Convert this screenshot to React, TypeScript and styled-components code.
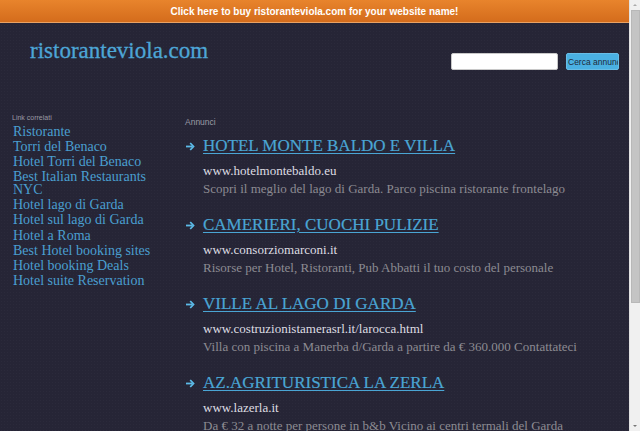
import React from "react";
import styled, { createGlobalStyle } from "styled-components";

const Global = createGlobalStyle`
  html, body { margin: 0; padding: 0; overflow: hidden; background: #262536; }
  * { box-sizing: border-box; }
`;

const Frame = styled.div`
  display: flex;
  width: 640px;
  height: 431px;
  overflow: hidden;
`;

const Page = styled.div`
  flex: 1;
  min-width: 0;
  height: 431px;
  background-color: #262536;
  background-image: radial-gradient(rgba(255,255,255,0.025) 1px, transparent 1px);
  background-size: 3px 3px;
  overflow: hidden;
`;

const TopBar = styled.a`
  display: flex;
  align-items: center;
  justify-content: center;
  height: 23px;
  background: linear-gradient(#e8842c, #d46c1c);
  border-bottom: 1px solid #e9a264;
  color: #fff;
  font: bold 10px "Liberation Sans", Arial, sans-serif;
  text-decoration: none;
`;

const Header = styled.div`
  display: flex;
  justify-content: space-between;
  align-items: flex-start;
  height: 90px;
  padding: 14px 10px 0 30px;
`;

const Logo = styled.div`
  font: 23px/28px "Liberation Serif", "Times New Roman", serif;
  color: #4da6d6;
  -webkit-text-stroke: 0.3px #4da6d6;
`;

const Search = styled.form`
  display: flex;
  gap: 8px;
  margin-top: 16px;
`;

const SearchInput = styled.input`
  width: 107px;
  height: 17px;
  border: 1px solid #c8c8c8;
  border-radius: 2px;
  background: #fff;
  padding: 0;
`;

const SearchButton = styled.button`
  width: 53px;
  height: 17px;
  padding: 0 0 0 1px;
  border: 1px solid #68bde6;
  border-radius: 2px;
  background: #4ab0e2;
  color: #1f2a3a;
  font: 8.5px "Liberation Sans", Arial, sans-serif;
  text-align: left;
  white-space: nowrap;
  overflow: hidden;
`;

const Body = styled.div`
  display: flex;
`;

const Sidebar = styled.div`
  width: 185px;
  flex: none;
  padding-left: 12px;
  padding-right: 26px;
`;

const SmallLabel = styled.div<{ $size?: number }>`
  font: ${(p) => p.$size ?? 7}px/10px "Liberation Sans", Arial, sans-serif;
  color: #9a9aa4;
`;

const LinkList = styled.ul`
  list-style: none;
  margin: 1.5px 0 0 1px;
  padding: 0;
  display: flex;
  flex-direction: column;
  gap: 2.2px;
`;

const SideLink = styled.a`
  display: block;
  font: 14px/13px "Liberation Serif", "Times New Roman", serif;
  color: #4a9fd0;
  text-decoration: none;
`;

const Content = styled.div`
  flex: 1;
  padding-top: 4px;
`;

const Ad = styled.div`
  margin-top: 9px;
  & + & { margin-top: 17px; }
`;

const TitleRow = styled.div`
  display: flex;
  align-items: center;
  height: 20px;
  margin-bottom: 6px;
`;

const Arrow = styled.svg`
  width: 18px;
  flex: none;
`;

const Title = styled.a`
  font: 17px/20px "Liberation Serif", "Times New Roman", serif;
  color: #4aa5d4;
  text-decoration: underline;
  text-underline-offset: 2px;
  text-transform: uppercase;
  -webkit-text-stroke: 0.2px #4aa5d4;
`;

const Line = styled.div<{ $muted?: boolean }>`
  padding-left: 18px;
  font: 13px/18px "Liberation Serif", "Times New Roman", serif;
  color: ${(p) => (p.$muted ? "#8c8b92" : "#dedde2")};
  white-space: nowrap;
`;

const Scrollbar = styled.div`
  width: 11px;
  height: 431px;
  background: #f0f0f0;
  border-left: 1px solid #e2e2e2;
  display: flex;
  flex-direction: column;
  align-items: center;
`;

const ScrollArrow = styled.div<{ $down?: boolean }>`
  height: 10px;
  display: flex;
  align-items: center;
  justify-content: center;
  &::after {
    content: "";
    border-left: 2px solid transparent;
    border-right: 2px solid transparent;
    ${(p) => (p.$down ? "border-top: 2px solid #777;" : "border-bottom: 2px solid #aaa;")}
  }
`;

const Thumb = styled.div`
  width: 9px;
  height: 293px;
  background: #c4c4c4;
  border: 1px solid #b8b8b8;
`;

const Spacer = styled.div`
  flex: 1;
`;

const links = [
  "Ristorante",
  "Torri del Benaco",
  "Hotel Torri del Benaco",
  "Best Italian Restaurants NYC",
  "Hotel lago di Garda",
  "Hotel sul lago di Garda",
  "Hotel a Roma",
  "Best Hotel booking sites",
  "Hotel booking Deals",
  "Hotel suite Reservation",
];

const ads = [
  {
    title: "HOTEL MONTE BALDO E VILLA",
    url: "www.hotelmontebaldo.eu",
    desc: "Scopri il meglio del lago di Garda. Parco piscina ristorante frontelago",
  },
  {
    title: "CAMERIERI, CUOCHI PULIZIE",
    url: "www.consorziomarconi.it",
    desc: "Risorse per Hotel, Ristoranti, Pub Abbatti il tuo costo del personale",
  },
  {
    title: "VILLE AL LAGO DI GARDA",
    url: "www.costruzionistamerasrl.it/larocca.html",
    desc: "Villa con piscina a Manerba d/Garda a partire da € 360.000 Contattateci",
  },
  {
    title: "AZ.AGRITURISTICA LA ZERLA",
    url: "www.lazerla.it",
    desc: "Da € 32 a notte per persone in b&b Vicino ai centri termali del Garda",
  },
];

export default function App() {
  return (
    <Frame>
      <Global />
      <Page>
        <TopBar href="#">Click here to buy ristoranteviola.com for your website name!</TopBar>
        <Header>
          <Logo>ristoranteviola.com</Logo>
          <Search onSubmit={(e) => e.preventDefault()}>
            <SearchInput type="text" />
            <SearchButton type="submit">Cerca annunci</SearchButton>
          </Search>
        </Header>
        <Body>
          <Sidebar>
            <SmallLabel>Link correlati</SmallLabel>
            <LinkList>
              {links.map((l) => (
                <li key={l}>
                  <SideLink href="#">{l}</SideLink>
                </li>
              ))}
            </LinkList>
          </Sidebar>
          <Content>
            <SmallLabel $size={8.5}>Annunci</SmallLabel>
            {ads.map((a) => (
              <Ad key={a.title}>
                <TitleRow>
                  <Arrow viewBox="0 0 18 12" height="12">
                    <path d="M1 6.5H7.5" stroke="#5cbbe8" strokeWidth="1.8" />
                    <path d="M5.2 3L8.5 6.5L5.2 10" fill="none" stroke="#5cbbe8" strokeWidth="1.8" />
                  </Arrow>
                  <Title href="#">{a.title}</Title>
                </TitleRow>
                <Line>{a.url}</Line>
                <Line $muted>{a.desc}</Line>
              </Ad>
            ))}
          </Content>
        </Body>
      </Page>
      <Scrollbar>
        <ScrollArrow />
        <Thumb />
        <Spacer />
        <ScrollArrow $down />
      </Scrollbar>
    </Frame>
  );
}
